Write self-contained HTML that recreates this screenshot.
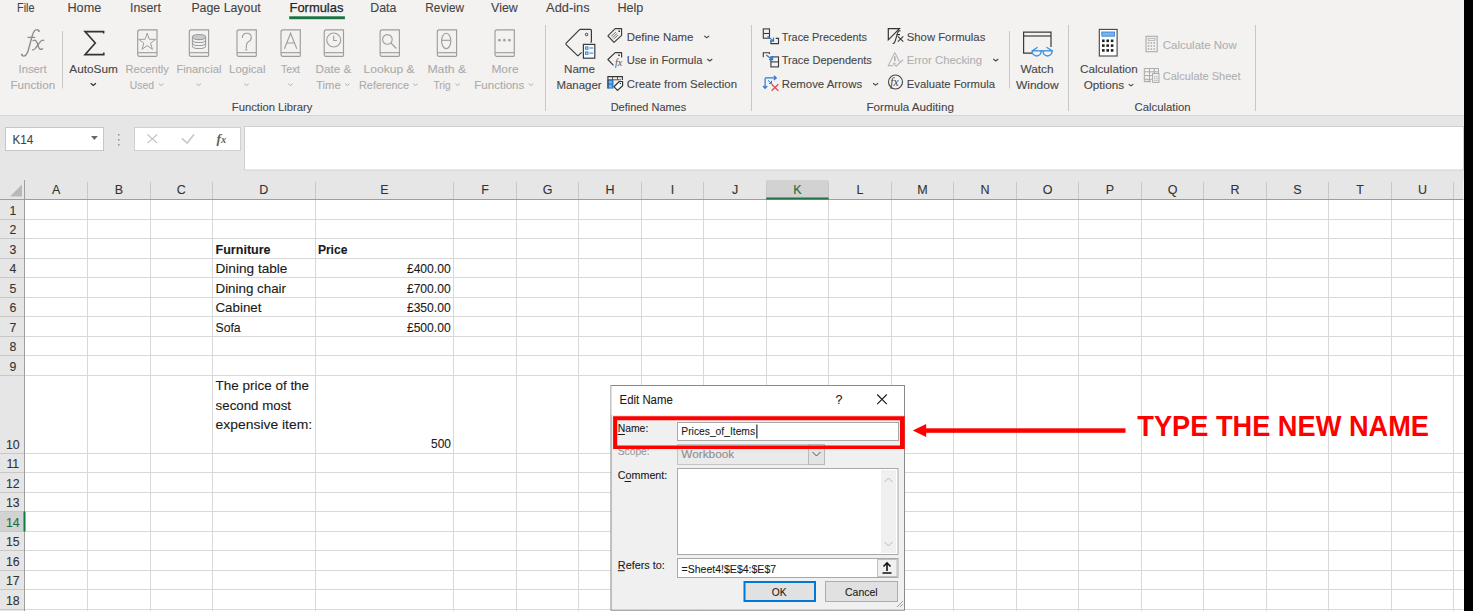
<!DOCTYPE html>
<html><head><meta charset="utf-8"><style>
html,body{margin:0;padding:0;background:#fff;overflow:hidden;}
svg{display:block;font-family:"Liberation Sans", sans-serif;}
</style></head><body>
<svg width="1473" height="611" viewBox="0 0 1473 611">
<rect x="0" y="0" width="1473" height="115" fill="#f3f2f1"/>
<rect x="0" y="115" width="1473" height="65" fill="#e6e6e6"/>
<line x1="0" y1="115.5" x2="1464" y2="115.5" stroke="#d6d6d6" stroke-width="1"/>
<text x="17" y="12" font-size="13" fill="#444" stroke="#444" stroke-width="0.1" textLength="17.6" lengthAdjust="spacingAndGlyphs">File</text>
<text x="67.5" y="12" font-size="13" fill="#444" stroke="#444" stroke-width="0.1" textLength="33.7" lengthAdjust="spacingAndGlyphs">Home</text>
<text x="130" y="12" font-size="13" fill="#444" stroke="#444" stroke-width="0.1" textLength="30.9" lengthAdjust="spacingAndGlyphs">Insert</text>
<text x="191.4" y="12" font-size="13" fill="#444" stroke="#444" stroke-width="0.1" textLength="69.3" lengthAdjust="spacingAndGlyphs">Page Layout</text>
<text x="289.5" y="12" font-size="13" fill="#262626" stroke="#262626" stroke-width="0.25" textLength="53.9" lengthAdjust="spacingAndGlyphs">Formulas</text>
<text x="370.3" y="12" font-size="13" fill="#444" stroke="#444" stroke-width="0.1" textLength="26.1" lengthAdjust="spacingAndGlyphs">Data</text>
<text x="425.3" y="12" font-size="13" fill="#444" stroke="#444" stroke-width="0.1" textLength="38.7" lengthAdjust="spacingAndGlyphs">Review</text>
<text x="491.1" y="12" font-size="13" fill="#444" stroke="#444" stroke-width="0.1" textLength="26.7" lengthAdjust="spacingAndGlyphs">View</text>
<text x="546.1" y="12" font-size="13" fill="#444" stroke="#444" stroke-width="0.1" textLength="43.5" lengthAdjust="spacingAndGlyphs">Add-ins</text>
<text x="617.4" y="12" font-size="13" fill="#444" stroke="#444" stroke-width="0.1" textLength="26.0" lengthAdjust="spacingAndGlyphs">Help</text>
<rect x="289.2" y="16.3" width="55.7" height="2.9" fill="#1a7343"/>
<rect x="25.0" y="199.3" width="1438.5" height="411.7" fill="#ffffff"/>
<rect x="0" y="180" width="1463.5" height="19.30000000000001" fill="#e6e6e6"/>
<rect x="0" y="199.3" width="25.0" height="411.7" fill="#e6e6e6"/>
<rect x="766.2" y="180" width="62.5" height="19.30000000000001" fill="#d2d2d2"/>
<rect x="0" y="511.5" width="25.0" height="20.0" fill="#d2d2d2"/>
<line x1="87.5" y1="199.3" x2="87.5" y2="611" stroke="#d9d9d9" stroke-width="1"/>
<line x1="87.5" y1="182" x2="87.5" y2="199.3" stroke="#c8c8c8" stroke-width="1"/>
<line x1="150.5" y1="199.3" x2="150.5" y2="611" stroke="#d9d9d9" stroke-width="1"/>
<line x1="150.5" y1="182" x2="150.5" y2="199.3" stroke="#c8c8c8" stroke-width="1"/>
<line x1="212.5" y1="199.3" x2="212.5" y2="611" stroke="#d9d9d9" stroke-width="1"/>
<line x1="212.5" y1="182" x2="212.5" y2="199.3" stroke="#c8c8c8" stroke-width="1"/>
<line x1="315.5" y1="199.3" x2="315.5" y2="611" stroke="#d9d9d9" stroke-width="1"/>
<line x1="315.5" y1="182" x2="315.5" y2="199.3" stroke="#c8c8c8" stroke-width="1"/>
<line x1="453.5" y1="199.3" x2="453.5" y2="611" stroke="#d9d9d9" stroke-width="1"/>
<line x1="453.5" y1="182" x2="453.5" y2="199.3" stroke="#c8c8c8" stroke-width="1"/>
<line x1="516.5" y1="199.3" x2="516.5" y2="611" stroke="#d9d9d9" stroke-width="1"/>
<line x1="516.5" y1="182" x2="516.5" y2="199.3" stroke="#c8c8c8" stroke-width="1"/>
<line x1="578.5" y1="199.3" x2="578.5" y2="611" stroke="#d9d9d9" stroke-width="1"/>
<line x1="578.5" y1="182" x2="578.5" y2="199.3" stroke="#c8c8c8" stroke-width="1"/>
<line x1="641.5" y1="199.3" x2="641.5" y2="611" stroke="#d9d9d9" stroke-width="1"/>
<line x1="641.5" y1="182" x2="641.5" y2="199.3" stroke="#c8c8c8" stroke-width="1"/>
<line x1="703.5" y1="199.3" x2="703.5" y2="611" stroke="#d9d9d9" stroke-width="1"/>
<line x1="703.5" y1="182" x2="703.5" y2="199.3" stroke="#c8c8c8" stroke-width="1"/>
<line x1="766.5" y1="199.3" x2="766.5" y2="611" stroke="#d9d9d9" stroke-width="1"/>
<line x1="766.5" y1="182" x2="766.5" y2="199.3" stroke="#c8c8c8" stroke-width="1"/>
<line x1="828.5" y1="199.3" x2="828.5" y2="611" stroke="#d9d9d9" stroke-width="1"/>
<line x1="828.5" y1="182" x2="828.5" y2="199.3" stroke="#c8c8c8" stroke-width="1"/>
<line x1="891.5" y1="199.3" x2="891.5" y2="611" stroke="#d9d9d9" stroke-width="1"/>
<line x1="891.5" y1="182" x2="891.5" y2="199.3" stroke="#c8c8c8" stroke-width="1"/>
<line x1="953.5" y1="199.3" x2="953.5" y2="611" stroke="#d9d9d9" stroke-width="1"/>
<line x1="953.5" y1="182" x2="953.5" y2="199.3" stroke="#c8c8c8" stroke-width="1"/>
<line x1="1016.5" y1="199.3" x2="1016.5" y2="611" stroke="#d9d9d9" stroke-width="1"/>
<line x1="1016.5" y1="182" x2="1016.5" y2="199.3" stroke="#c8c8c8" stroke-width="1"/>
<line x1="1078.5" y1="199.3" x2="1078.5" y2="611" stroke="#d9d9d9" stroke-width="1"/>
<line x1="1078.5" y1="182" x2="1078.5" y2="199.3" stroke="#c8c8c8" stroke-width="1"/>
<line x1="1141.5" y1="199.3" x2="1141.5" y2="611" stroke="#d9d9d9" stroke-width="1"/>
<line x1="1141.5" y1="182" x2="1141.5" y2="199.3" stroke="#c8c8c8" stroke-width="1"/>
<line x1="1203.5" y1="199.3" x2="1203.5" y2="611" stroke="#d9d9d9" stroke-width="1"/>
<line x1="1203.5" y1="182" x2="1203.5" y2="199.3" stroke="#c8c8c8" stroke-width="1"/>
<line x1="1266.5" y1="199.3" x2="1266.5" y2="611" stroke="#d9d9d9" stroke-width="1"/>
<line x1="1266.5" y1="182" x2="1266.5" y2="199.3" stroke="#c8c8c8" stroke-width="1"/>
<line x1="1328.5" y1="199.3" x2="1328.5" y2="611" stroke="#d9d9d9" stroke-width="1"/>
<line x1="1328.5" y1="182" x2="1328.5" y2="199.3" stroke="#c8c8c8" stroke-width="1"/>
<line x1="1391.5" y1="199.3" x2="1391.5" y2="611" stroke="#d9d9d9" stroke-width="1"/>
<line x1="1391.5" y1="182" x2="1391.5" y2="199.3" stroke="#c8c8c8" stroke-width="1"/>
<line x1="1453.5" y1="199.3" x2="1453.5" y2="611" stroke="#d9d9d9" stroke-width="1"/>
<line x1="1453.5" y1="182" x2="1453.5" y2="199.3" stroke="#c8c8c8" stroke-width="1"/>
<line x1="25.0" y1="219.5" x2="1463.5" y2="219.5" stroke="#d9d9d9" stroke-width="1"/>
<line x1="0" y1="219.5" x2="25.0" y2="219.5" stroke="#c8c8c8" stroke-width="1"/>
<line x1="25.0" y1="238.5" x2="1463.5" y2="238.5" stroke="#d9d9d9" stroke-width="1"/>
<line x1="0" y1="238.5" x2="25.0" y2="238.5" stroke="#c8c8c8" stroke-width="1"/>
<line x1="25.0" y1="258.5" x2="1463.5" y2="258.5" stroke="#d9d9d9" stroke-width="1"/>
<line x1="0" y1="258.5" x2="25.0" y2="258.5" stroke="#c8c8c8" stroke-width="1"/>
<line x1="25.0" y1="277.5" x2="1463.5" y2="277.5" stroke="#d9d9d9" stroke-width="1"/>
<line x1="0" y1="277.5" x2="25.0" y2="277.5" stroke="#c8c8c8" stroke-width="1"/>
<line x1="25.0" y1="297.5" x2="1463.5" y2="297.5" stroke="#d9d9d9" stroke-width="1"/>
<line x1="0" y1="297.5" x2="25.0" y2="297.5" stroke="#c8c8c8" stroke-width="1"/>
<line x1="25.0" y1="316.5" x2="1463.5" y2="316.5" stroke="#d9d9d9" stroke-width="1"/>
<line x1="0" y1="316.5" x2="25.0" y2="316.5" stroke="#c8c8c8" stroke-width="1"/>
<line x1="25.0" y1="336.5" x2="1463.5" y2="336.5" stroke="#d9d9d9" stroke-width="1"/>
<line x1="0" y1="336.5" x2="25.0" y2="336.5" stroke="#c8c8c8" stroke-width="1"/>
<line x1="25.0" y1="355.5" x2="1463.5" y2="355.5" stroke="#d9d9d9" stroke-width="1"/>
<line x1="0" y1="355.5" x2="25.0" y2="355.5" stroke="#c8c8c8" stroke-width="1"/>
<line x1="25.0" y1="375.5" x2="1463.5" y2="375.5" stroke="#d9d9d9" stroke-width="1"/>
<line x1="0" y1="375.5" x2="25.0" y2="375.5" stroke="#c8c8c8" stroke-width="1"/>
<line x1="25.0" y1="453.5" x2="1463.5" y2="453.5" stroke="#d9d9d9" stroke-width="1"/>
<line x1="0" y1="453.5" x2="25.0" y2="453.5" stroke="#c8c8c8" stroke-width="1"/>
<line x1="25.0" y1="472.5" x2="1463.5" y2="472.5" stroke="#d9d9d9" stroke-width="1"/>
<line x1="0" y1="472.5" x2="25.0" y2="472.5" stroke="#c8c8c8" stroke-width="1"/>
<line x1="25.0" y1="492.5" x2="1463.5" y2="492.5" stroke="#d9d9d9" stroke-width="1"/>
<line x1="0" y1="492.5" x2="25.0" y2="492.5" stroke="#c8c8c8" stroke-width="1"/>
<line x1="25.0" y1="511.5" x2="1463.5" y2="511.5" stroke="#d9d9d9" stroke-width="1"/>
<line x1="0" y1="511.5" x2="25.0" y2="511.5" stroke="#c8c8c8" stroke-width="1"/>
<line x1="25.0" y1="531.5" x2="1463.5" y2="531.5" stroke="#d9d9d9" stroke-width="1"/>
<line x1="0" y1="531.5" x2="25.0" y2="531.5" stroke="#c8c8c8" stroke-width="1"/>
<line x1="25.0" y1="550.5" x2="1463.5" y2="550.5" stroke="#d9d9d9" stroke-width="1"/>
<line x1="0" y1="550.5" x2="25.0" y2="550.5" stroke="#c8c8c8" stroke-width="1"/>
<line x1="25.0" y1="570.5" x2="1463.5" y2="570.5" stroke="#d9d9d9" stroke-width="1"/>
<line x1="0" y1="570.5" x2="25.0" y2="570.5" stroke="#c8c8c8" stroke-width="1"/>
<line x1="25.0" y1="589.5" x2="1463.5" y2="589.5" stroke="#d9d9d9" stroke-width="1"/>
<line x1="0" y1="589.5" x2="25.0" y2="589.5" stroke="#c8c8c8" stroke-width="1"/>
<line x1="25.0" y1="609.5" x2="1463.5" y2="609.5" stroke="#d9d9d9" stroke-width="1"/>
<line x1="0" y1="609.5" x2="25.0" y2="609.5" stroke="#c8c8c8" stroke-width="1"/>
<line x1="0" y1="199.5" x2="1463.5" y2="199.5" stroke="#9e9e9e" stroke-width="1"/>
<line x1="24.5" y1="180" x2="24.5" y2="611" stroke="#9e9e9e" stroke-width="1"/>
<rect x="766.2" y="197.5" width="62.5" height="2" fill="#217346"/>
<rect x="23.5" y="511.5" width="2" height="20.0" fill="#107c41"/>
<path d="M10 196.5 L22 196.5 L22 184.5 Z" fill="#b8b8b8"/>
<text x="56.2" y="194" font-size="12.5" fill="#333" stroke="#333" stroke-width="0.1" text-anchor="middle">A</text>
<text x="118.8" y="194" font-size="12.5" fill="#333" stroke="#333" stroke-width="0.1" text-anchor="middle">B</text>
<text x="181.2" y="194" font-size="12.5" fill="#333" stroke="#333" stroke-width="0.1" text-anchor="middle">C</text>
<text x="263.8" y="194" font-size="12.5" fill="#333" stroke="#333" stroke-width="0.1" text-anchor="middle">D</text>
<text x="384.4" y="194" font-size="12.5" fill="#333" stroke="#333" stroke-width="0.1" text-anchor="middle">E</text>
<text x="485.0" y="194" font-size="12.5" fill="#333" stroke="#333" stroke-width="0.1" text-anchor="middle">F</text>
<text x="547.5" y="194" font-size="12.5" fill="#333" stroke="#333" stroke-width="0.1" text-anchor="middle">G</text>
<text x="610.0" y="194" font-size="12.5" fill="#333" stroke="#333" stroke-width="0.1" text-anchor="middle">H</text>
<text x="672.5" y="194" font-size="12.5" fill="#333" stroke="#333" stroke-width="0.1" text-anchor="middle">I</text>
<text x="735.0" y="194" font-size="12.5" fill="#333" stroke="#333" stroke-width="0.1" text-anchor="middle">J</text>
<text x="797.5" y="194" font-size="12.5" fill="#1d6b40" stroke="#1d6b40" stroke-width="0.1" text-anchor="middle">K</text>
<text x="860.0" y="194" font-size="12.5" fill="#333" stroke="#333" stroke-width="0.1" text-anchor="middle">L</text>
<text x="922.5" y="194" font-size="12.5" fill="#333" stroke="#333" stroke-width="0.1" text-anchor="middle">M</text>
<text x="985.0" y="194" font-size="12.5" fill="#333" stroke="#333" stroke-width="0.1" text-anchor="middle">N</text>
<text x="1047.5" y="194" font-size="12.5" fill="#333" stroke="#333" stroke-width="0.1" text-anchor="middle">O</text>
<text x="1110.0" y="194" font-size="12.5" fill="#333" stroke="#333" stroke-width="0.1" text-anchor="middle">P</text>
<text x="1172.5" y="194" font-size="12.5" fill="#333" stroke="#333" stroke-width="0.1" text-anchor="middle">Q</text>
<text x="1235.0" y="194" font-size="12.5" fill="#333" stroke="#333" stroke-width="0.1" text-anchor="middle">R</text>
<text x="1297.5" y="194" font-size="12.5" fill="#333" stroke="#333" stroke-width="0.1" text-anchor="middle">S</text>
<text x="1360.0" y="194" font-size="12.5" fill="#333" stroke="#333" stroke-width="0.1" text-anchor="middle">T</text>
<text x="1422.5" y="194" font-size="12.5" fill="#333" stroke="#333" stroke-width="0.1" text-anchor="middle">U</text>
<text x="12.8" y="214.8" font-size="12.3" fill="#333" stroke="#333" stroke-width="0.1" text-anchor="middle">1</text>
<text x="12.8" y="233.8" font-size="12.3" fill="#333" stroke="#333" stroke-width="0.1" text-anchor="middle">2</text>
<text x="12.8" y="253.8" font-size="12.3" fill="#333" stroke="#333" stroke-width="0.1" text-anchor="middle">3</text>
<text x="12.8" y="272.8" font-size="12.3" fill="#333" stroke="#333" stroke-width="0.1" text-anchor="middle">4</text>
<text x="12.8" y="292.8" font-size="12.3" fill="#333" stroke="#333" stroke-width="0.1" text-anchor="middle">5</text>
<text x="12.8" y="311.8" font-size="12.3" fill="#333" stroke="#333" stroke-width="0.1" text-anchor="middle">6</text>
<text x="12.8" y="331.8" font-size="12.3" fill="#333" stroke="#333" stroke-width="0.1" text-anchor="middle">7</text>
<text x="12.8" y="350.8" font-size="12.3" fill="#333" stroke="#333" stroke-width="0.1" text-anchor="middle">8</text>
<text x="12.8" y="370.8" font-size="12.3" fill="#333" stroke="#333" stroke-width="0.1" text-anchor="middle">9</text>
<text x="12.8" y="448.8" font-size="12.3" fill="#333" stroke="#333" stroke-width="0.1" text-anchor="middle">10</text>
<text x="12.8" y="467.8" font-size="12.3" fill="#333" stroke="#333" stroke-width="0.1" text-anchor="middle">11</text>
<text x="12.8" y="487.8" font-size="12.3" fill="#333" stroke="#333" stroke-width="0.1" text-anchor="middle">12</text>
<text x="12.8" y="506.8" font-size="12.3" fill="#333" stroke="#333" stroke-width="0.1" text-anchor="middle">13</text>
<text x="12.8" y="526.8" font-size="12.3" fill="#1d6b40" stroke="#1d6b40" stroke-width="0.1" text-anchor="middle">14</text>
<text x="12.8" y="545.8" font-size="12.3" fill="#333" stroke="#333" stroke-width="0.1" text-anchor="middle">15</text>
<text x="12.8" y="565.8" font-size="12.3" fill="#333" stroke="#333" stroke-width="0.1" text-anchor="middle">16</text>
<text x="12.8" y="584.8" font-size="12.3" fill="#333" stroke="#333" stroke-width="0.1" text-anchor="middle">17</text>
<text x="12.8" y="604.8" font-size="12.3" fill="#333" stroke="#333" stroke-width="0.1" text-anchor="middle">18</text>
<text x="215.5" y="253.5" font-size="13" fill="#1a1a1a" stroke="#1a1a1a" stroke-width="0.1" font-weight="700" textLength="55.1" lengthAdjust="spacingAndGlyphs">Furniture</text>
<text x="317.9" y="253.5" font-size="13" fill="#1a1a1a" stroke="#1a1a1a" stroke-width="0.1" font-weight="700" textLength="29.5" lengthAdjust="spacingAndGlyphs">Price</text>
<text x="215.5" y="273.2" font-size="12.6" fill="#1a1a1a" stroke="#1a1a1a" stroke-width="0.1" textLength="71.9" lengthAdjust="spacingAndGlyphs">Dining table</text>
<text x="406.9" y="273.2" font-size="12.4" fill="#1a1a1a" stroke="#1a1a1a" stroke-width="0.1" textLength="43.8" lengthAdjust="spacingAndGlyphs">£400.00</text>
<text x="215.5" y="292.7" font-size="12.6" fill="#1a1a1a" stroke="#1a1a1a" stroke-width="0.1" textLength="70.5" lengthAdjust="spacingAndGlyphs">Dining chair</text>
<text x="406.9" y="292.7" font-size="12.4" fill="#1a1a1a" stroke="#1a1a1a" stroke-width="0.1" textLength="43.8" lengthAdjust="spacingAndGlyphs">£700.00</text>
<text x="215.5" y="312.2" font-size="12.6" fill="#1a1a1a" stroke="#1a1a1a" stroke-width="0.1" textLength="45.9" lengthAdjust="spacingAndGlyphs">Cabinet</text>
<text x="406.9" y="312.2" font-size="12.4" fill="#1a1a1a" stroke="#1a1a1a" stroke-width="0.1" textLength="43.8" lengthAdjust="spacingAndGlyphs">£350.00</text>
<text x="215.5" y="331.8" font-size="12.6" fill="#1a1a1a" stroke="#1a1a1a" stroke-width="0.1" textLength="25.1" lengthAdjust="spacingAndGlyphs">Sofa</text>
<text x="406.9" y="331.8" font-size="12.4" fill="#1a1a1a" stroke="#1a1a1a" stroke-width="0.1" textLength="43.8" lengthAdjust="spacingAndGlyphs">£500.00</text>
<text x="215.6" y="390.3" font-size="12.6" fill="#1a1a1a" stroke="#1a1a1a" stroke-width="0.1" textLength="93.5" lengthAdjust="spacingAndGlyphs">The price of the</text>
<text x="215.6" y="409.7" font-size="12.6" fill="#1a1a1a" stroke="#1a1a1a" stroke-width="0.1" textLength="75.4" lengthAdjust="spacingAndGlyphs">second most</text>
<text x="215.6" y="428.8" font-size="12.6" fill="#1a1a1a" stroke="#1a1a1a" stroke-width="0.1" textLength="96.5" lengthAdjust="spacingAndGlyphs">expensive item:</text>
<text x="431" y="448.2" font-size="12.4" fill="#1a1a1a" stroke="#1a1a1a" stroke-width="0.1" textLength="19.9" lengthAdjust="spacingAndGlyphs">500</text>
<rect x="5.5" y="127.5" width="98" height="23" fill="#fff" stroke="#c6c6c6" stroke-width="1"/>
<text x="12.4" y="144" font-size="12.5" fill="#444" stroke="#444" stroke-width="0.1" textLength="20.9" lengthAdjust="spacingAndGlyphs">K14</text>
<path d="M91 136 L97.8 136 L94.4 140 Z" fill="#666"/>
<rect x="118" y="134" width="1.6" height="1.6" fill="#9a9a9a"/>
<rect x="118" y="139" width="1.6" height="1.6" fill="#9a9a9a"/>
<rect x="118" y="144" width="1.6" height="1.6" fill="#9a9a9a"/>
<rect x="134.5" y="127.5" width="106" height="23" fill="#fff" stroke="#d0d0d0" stroke-width="1"/>
<path d="M147.5 134.5 L157.2 143.1 M157.2 134.5 L147.5 143.1" stroke="#c2c2c2" stroke-width="1.15" fill="none"/>
<path d="M181.8 138.4 L187.2 143.1 L193.9 134.5" stroke="#c8c8c8" stroke-width="1.6" fill="none"/>
<text x="216.5" y="143.3" font-size="13.5" fill="#606060" font-weight="700" font-style="italic" font-family="Liberation Serif">f<tspan font-size="10.5">x</tspan></text>
<rect x="244.5" y="126.5" width="1219" height="43.5" fill="#fff" stroke="#d0d0d0" stroke-width="1"/>
<rect x="1464" y="0" width="9" height="611" fill="#000"/>
<!--RIBBON-->
<line x1="62.5" y1="31" x2="62.5" y2="88.5" stroke="#c8c8c8" stroke-width="1"/>
<line x1="545.5" y1="25" x2="545.5" y2="111" stroke="#c8c8c8" stroke-width="1"/>
<line x1="751.5" y1="25" x2="751.5" y2="111" stroke="#c8c8c8" stroke-width="1"/>
<line x1="1009.5" y1="31" x2="1009.5" y2="88.5" stroke="#c8c8c8" stroke-width="1"/>
<line x1="1068.5" y1="25" x2="1068.5" y2="111" stroke="#c8c8c8" stroke-width="1"/>
<line x1="1255.5" y1="25" x2="1255.5" y2="111" stroke="#c8c8c8" stroke-width="1"/>
<text x="231.8" y="111" font-size="11.3" fill="#464646" stroke="#464646" stroke-width="0.1" textLength="80.7" lengthAdjust="spacingAndGlyphs">Function Library</text>
<text x="610.7" y="111" font-size="11.3" fill="#464646" stroke="#464646" stroke-width="0.1" textLength="75.5" lengthAdjust="spacingAndGlyphs">Defined Names</text>
<text x="866.5" y="111" font-size="11.3" fill="#464646" stroke="#464646" stroke-width="0.1" textLength="87.4" lengthAdjust="spacingAndGlyphs">Formula Auditing</text>
<text x="1134.5" y="111.2" font-size="11.3" fill="#464646" stroke="#464646" stroke-width="0.1" textLength="56" lengthAdjust="spacingAndGlyphs">Calculation</text>
<g fill="none" stroke="#8c8c8c" stroke-width="1.35" stroke-linecap="round"><path d="M38.9 31.2 C38.5 29.6 37 29.2 35.5 30 C33.6 31.1 32.6 34 31.6 38 L28.2 50.5 C27.2 54 25.6 56.1 23.6 56.1 C22.5 56.1 21.8 55.3 21.9 54.5"/><path d="M28 37.4 L34.8 37.4" stroke-width="1.1"/><path d="M33.1 40.6 C34.6 39.6 36 40.1 37 42.6 L38.6 47 C39.3 49 40.1 49.9 42.5 48.8"/><path d="M43.7 40.4 C42.5 39.6 41 40.6 39.6 42.6 L35.6 48 C34.6 49.5 33.6 50 32.7 49.8"/></g>
<circle cx="38.8" cy="31" r="0.9" fill="#8c8c8c"/><circle cx="22" cy="54.6" r="0.9" fill="#8c8c8c"/>
<text x="18.6" y="73" font-size="11.6" fill="#ababab" stroke="#ababab" stroke-width="0.1" textLength="28" lengthAdjust="spacingAndGlyphs">Insert</text>
<text x="10.5" y="88.8" font-size="11.6" fill="#ababab" stroke="#ababab" stroke-width="0.1" textLength="44.6" lengthAdjust="spacingAndGlyphs">Function</text>
<path d="M103.6 33.5 L103.6 31.6 L85 31.6 L95.3 43 L85 54.6 L103.8 54.6 L103.8 52.5" stroke="#333" stroke-width="1.6" fill="none" stroke-linejoin="miter"/>
<text x="69.3" y="73" font-size="11.6" fill="#464646" stroke="#464646" stroke-width="0.1" textLength="48.5" lengthAdjust="spacingAndGlyphs">AutoSum</text>
<path d="M90.7 83.2 L93.3 85.39999999999999 L95.89999999999999 83.2" stroke="#333" stroke-width="1.3" fill="none"/>
<g fill="none" stroke="#9d9d9d" stroke-width="1.15"><path d="M139.8 29.8 L157.0 29.8 L157.0 55.4 Q157.0 56.3 156.1 56.3 L139.2 56.3 Q137.7 56.3 137.7 54.6 L137.7 31.9 Q137.7 29.8 139.8 29.8 Z"/><path d="M137.7 52.7 L157.0 52.7"/></g>
<path d="M147.20 33.20 L149.26 39.27 L155.66 39.35 L150.53 43.18 L152.43 49.30 L147.20 45.60 L141.97 49.30 L143.87 43.18 L138.74 39.35 L145.14 39.27 Z" fill="none" stroke="#9d9d9d" stroke-width="1" stroke-linejoin="miter"/>
<g fill="none" stroke="#9d9d9d" stroke-width="1.15"><path d="M191.4 29.8 L208.6 29.8 L208.6 55.4 Q208.6 56.3 207.7 56.3 L190.79999999999998 56.3 Q189.29999999999998 56.3 189.29999999999998 54.6 L189.29999999999998 31.9 Q189.29999999999998 29.8 191.4 29.8 Z"/><path d="M189.29999999999998 52.7 L208.6 52.7"/></g>
<g fill="none" stroke="#9d9d9d" stroke-width="1.05"><path d="M192.4 37 L192.4 45.8 M205.6 37 L205.6 45.8"/><path d="M192.4 39.9 A6.6 2.6 0 0 0 205.6 39.9"/><path d="M192.4 42.9 A6.6 2.6 0 0 0 205.6 42.9"/><path d="M192.4 45.9 A6.6 2.6 0 0 0 205.6 45.9"/><ellipse cx="199.0" cy="37" rx="6.6" ry="2.6" fill="#c9c9c9"/></g>
<g fill="none" stroke="#9d9d9d" stroke-width="1.15"><path d="M239.10000000000002 29.8 L256.3 29.8 L256.3 55.4 Q256.3 56.3 255.4 56.3 L238.5 56.3 Q237.0 56.3 237.0 54.6 L237.0 31.9 Q237.0 29.8 239.10000000000002 29.8 Z"/><path d="M237.0 52.7 L256.3 52.7"/></g>
<path d="M242.3 38 Q242.3 33.2 246.90000000000003 33.2 Q251.3 33.2 251.3 37.5 Q251.3 40.5 248.10000000000002 42 Q246.3 43 246.3 46.5 L246.3 48" fill="none" stroke="#9d9d9d" stroke-width="1.1"/><circle cx="246.3" cy="49.5" r="1" fill="#9d9d9d"/>
<g fill="none" stroke="#9d9d9d" stroke-width="1.15"><path d="M283.1 29.8 L300.3 29.8 L300.3 55.4 Q300.3 56.3 299.40000000000003 56.3 L282.5 56.3 Q281.0 56.3 281.0 54.6 L281.0 31.9 Q281.0 29.8 283.1 29.8 Z"/><path d="M281.0 52.7 L300.3 52.7"/></g>
<path d="M284.40000000000003 48.8 L290.6 33.3 L296.8 48.8 M286.8 43 L294.40000000000003 43" fill="none" stroke="#9d9d9d" stroke-width="1.1"/>
<g fill="none" stroke="#9d9d9d" stroke-width="1.15"><path d="M326.3 29.8 L343.5 29.8 L343.5 55.4 Q343.5 56.3 342.6 56.3 L325.7 56.3 Q324.2 56.3 324.2 54.6 L324.2 31.9 Q324.2 29.8 326.3 29.8 Z"/><path d="M324.2 52.7 L343.5 52.7"/></g>
<circle cx="333.7" cy="40" r="7" fill="none" stroke="#9d9d9d" stroke-width="1.1"/><path d="M333.7 35.8 L333.7 40.5 L337.0 40.5" fill="none" stroke="#9d9d9d" stroke-width="1.1"/>
<g fill="none" stroke="#9d9d9d" stroke-width="1.15"><path d="M382.2 29.8 L399.4 29.8 L399.4 55.4 Q399.4 56.3 398.5 56.3 L381.59999999999997 56.3 Q380.09999999999997 56.3 380.09999999999997 54.6 L380.09999999999997 31.9 Q380.09999999999997 29.8 382.2 29.8 Z"/><path d="M380.09999999999997 52.7 L399.4 52.7"/></g>
<circle cx="387.4" cy="39.4" r="4.8" fill="none" stroke="#9d9d9d" stroke-width="1.1"/><path d="M390.79999999999995 42.8 L396.4 48.5" fill="none" stroke="#9d9d9d" stroke-width="1.2"/>
<g fill="none" stroke="#9d9d9d" stroke-width="1.15"><path d="M439.40000000000003 29.8 L456.6 29.8 L456.6 55.4 Q456.6 56.3 455.70000000000005 56.3 L438.8 56.3 Q437.3 56.3 437.3 54.6 L437.3 31.9 Q437.3 29.8 439.40000000000003 29.8 Z"/><path d="M437.3 52.7 L456.6 52.7"/></g>
<ellipse cx="446.20000000000005" cy="40.9" rx="4.6" ry="7.7" fill="none" stroke="#9d9d9d" stroke-width="1.15"/><path d="M441.6 40.3 L450.80000000000007 40.3" stroke="#9d9d9d" stroke-width="1.1"/>
<g fill="none" stroke="#9d9d9d" stroke-width="1.15"><path d="M497.1 29.8 L514.3 29.8 L514.3 55.4 Q514.3 56.3 513.4 56.3 L496.5 56.3 Q495.0 56.3 495.0 54.6 L495.0 31.9 Q495.0 29.8 497.1 29.8 Z"/><path d="M495.0 52.7 L514.3 52.7"/></g>
<circle cx="499.40000000000003" cy="40.2" r="1.35" fill="#a2a2a2"/><circle cx="504.40000000000003" cy="40.2" r="1.35" fill="#a2a2a2"/><circle cx="509.40000000000003" cy="40.2" r="1.35" fill="#a2a2a2"/>
<text x="125.5" y="73" font-size="11.6" fill="#ababab" stroke="#ababab" stroke-width="0.1" textLength="43.3" lengthAdjust="spacingAndGlyphs">Recently</text>
<text x="129.8" y="88.8" font-size="11.6" fill="#ababab" stroke="#ababab" stroke-width="0.1" textLength="24.2" lengthAdjust="spacingAndGlyphs">Used</text>
<text x="176.4" y="73" font-size="11.6" fill="#ababab" stroke="#ababab" stroke-width="0.1" textLength="45.0" lengthAdjust="spacingAndGlyphs">Financial</text>
<text x="229" y="73" font-size="11.6" fill="#ababab" stroke="#ababab" stroke-width="0.1" textLength="36.5" lengthAdjust="spacingAndGlyphs">Logical</text>
<text x="281" y="73" font-size="11.6" fill="#ababab" stroke="#ababab" stroke-width="0.1" textLength="19" lengthAdjust="spacingAndGlyphs">Text</text>
<text x="315.6" y="73" font-size="11.6" fill="#ababab" stroke="#ababab" stroke-width="0.1" textLength="35.8" lengthAdjust="spacingAndGlyphs">Date &amp;</text>
<text x="316.2" y="88.8" font-size="11.6" fill="#ababab" stroke="#ababab" stroke-width="0.1" textLength="24.5" lengthAdjust="spacingAndGlyphs">Time</text>
<text x="363.5" y="73" font-size="11.6" fill="#ababab" stroke="#ababab" stroke-width="0.1" textLength="51.0" lengthAdjust="spacingAndGlyphs">Lookup &amp;</text>
<text x="359" y="88.8" font-size="11.6" fill="#ababab" stroke="#ababab" stroke-width="0.1" textLength="50.1" lengthAdjust="spacingAndGlyphs">Reference</text>
<text x="427.4" y="73" font-size="11.6" fill="#ababab" stroke="#ababab" stroke-width="0.1" textLength="38.9" lengthAdjust="spacingAndGlyphs">Math &amp;</text>
<text x="433.5" y="88.8" font-size="11.6" fill="#ababab" stroke="#ababab" stroke-width="0.1" textLength="17.1" lengthAdjust="spacingAndGlyphs">Trig</text>
<text x="491.4" y="73" font-size="11.6" fill="#ababab" stroke="#ababab" stroke-width="0.1" textLength="27.2" lengthAdjust="spacingAndGlyphs">More</text>
<text x="474.3" y="88.8" font-size="11.6" fill="#ababab" stroke="#ababab" stroke-width="0.1" textLength="50.0" lengthAdjust="spacingAndGlyphs">Functions</text>
<path d="M158.9 83.69999999999999 L161.1 85.5 L163.29999999999998 83.69999999999999" stroke="#b0b0b0" stroke-width="1" fill="none"/>
<path d="M196.5 83.69999999999999 L198.7 85.5 L200.89999999999998 83.69999999999999" stroke="#b0b0b0" stroke-width="1" fill="none"/>
<path d="M244.3 83.69999999999999 L246.5 85.5 L248.7 83.69999999999999" stroke="#b0b0b0" stroke-width="1" fill="none"/>
<path d="M288.3 83.69999999999999 L290.5 85.5 L292.7 83.69999999999999" stroke="#b0b0b0" stroke-width="1" fill="none"/>
<path d="M345.2 83.69999999999999 L347.4 85.5 L349.59999999999997 83.69999999999999" stroke="#b0b0b0" stroke-width="1" fill="none"/>
<path d="M413.2 83.69999999999999 L415.4 85.5 L417.59999999999997 83.69999999999999" stroke="#b0b0b0" stroke-width="1" fill="none"/>
<path d="M455.40000000000003 83.69999999999999 L457.6 85.5 L459.8 83.69999999999999" stroke="#b0b0b0" stroke-width="1" fill="none"/>
<path d="M528.6999999999999 83.69999999999999 L530.9 85.5 L533.1 83.69999999999999" stroke="#b0b0b0" stroke-width="1" fill="none"/>
<text x="564" y="73" font-size="11.6" fill="#464646" stroke="#464646" stroke-width="0.1" textLength="31" lengthAdjust="spacingAndGlyphs">Name</text>
<text x="556.4" y="89" font-size="11.6" fill="#464646" stroke="#464646" stroke-width="0.1" textLength="45.2" lengthAdjust="spacingAndGlyphs">Manager</text>
<path d="M590.6 42.6 L591.4 41.8 L591.4 30.6 Q591.4 29.4 590.2 29.4 L580.4 29.4 Q579.8 29.4 579.3 29.9 L566.2 43.2 Q565.6 43.9 566.2 44.6 L577.3 55.4 Q577.9 56 578.5 55.4 L581.6 52.3" fill="none" stroke="#3a3a3a" stroke-width="1.2"/>
<circle cx="586.6" cy="34.5" r="1.25" fill="none" stroke="#3a3a3a" stroke-width="1"/>
<rect x="583.4" y="44.4" width="11.4" height="13.8" fill="#f4f9fe" stroke="#3a3a3a" stroke-width="1.2"/>
<rect x="585.6" y="46.9" width="2.3" height="2.3" fill="none" stroke="#2b7bd6" stroke-width="1"/><rect x="585.6" y="52" width="2.3" height="2.3" fill="none" stroke="#2b7bd6" stroke-width="1"/>
<path d="M589.4 48 L593.2 48 M589.4 53.1 L593.2 53.1" stroke="#2b7bd6" stroke-width="1"/>
<path d="M615.2 28.6 L621.6 28.6 L621.6 35.3 L614 42.3 L607.9 35.8 Z" fill="none" stroke="#3a3a3a" stroke-width="1.15" stroke-linejoin="round"/>
<path d="M611.3 36.2 L615.9 32.1 M612.5 37.6 L617.1 33.5 M613.7 39 L618.3 34.9" stroke="#555" stroke-width="0.8"/>
<circle cx="619.2" cy="31.2" r="0.9" fill="#3a3a3a"/>
<text x="626.7" y="40.6" font-size="11.6" fill="#464646" stroke="#464646" stroke-width="0.1" textLength="66.7" lengthAdjust="spacingAndGlyphs">Define Name</text>
<path d="M704.2 35.849999999999994 L706.7 37.75 L709.2 35.849999999999994" stroke="#464646" stroke-width="1.1" fill="none"/>
<path d="M621.6 57.6 L621.6 52.6 L615.2 52.6 L607.9 59.5 L613.5 65.4" fill="none" stroke="#3a3a3a" stroke-width="1.15" stroke-linejoin="round"/>
<circle cx="619" cy="55.2" r="0.9" fill="#3a3a3a"/>
<text x="615" y="65.8" font-size="10" fill="#555" font-style="italic" font-family="Liberation Serif">fx</text>
<text x="626.7" y="63.8" font-size="11.6" fill="#464646" stroke="#464646" stroke-width="0.1" textLength="75.8" lengthAdjust="spacingAndGlyphs">Use in Formula</text>
<path d="M707.3 59.05 L709.8 60.95 L712.3 59.05" stroke="#464646" stroke-width="1.1" fill="none"/>
<rect x="607.6" y="79.8" width="5.9" height="8.8" fill="#2f7fd1"/>
<rect x="608.6" y="80.7" width="3.2" height="2.7" fill="#72b6ee"/><rect x="608.6" y="84.8" width="3.2" height="2.8" fill="#72b6ee"/>
<path d="M607.9 88.5 L607.9 76.6 L622.4 76.6 L622.4 80" fill="none" stroke="#333" stroke-width="1.1"/>
<path d="M612.5 76.6 L612.5 79.8 M617.5 76.6 L617.5 79.8 M607.9 79.8 L621 79.8" stroke="#444" stroke-width="0.9"/>
<path d="M619.3 81.5 L622.6 81.5 L622.6 85.7 L617.5 90.4 L613.9 86.7 Z" fill="#fff" stroke="#333" stroke-width="1.2" stroke-linejoin="round"/>
<circle cx="620.4" cy="83.6" r="0.75" fill="#333"/>
<text x="626.7" y="87.8" font-size="11.6" fill="#464646" stroke="#464646" stroke-width="0.1" textLength="110.3" lengthAdjust="spacingAndGlyphs">Create from Selection</text>
<g fill="none" stroke="#3a3a3a" stroke-width="1.1"><rect x="763.3" y="28.9" width="6.2" height="9.3"/><path d="M763.3 33.5 L769.5 33.5"/><path d="M770.9 40.3 L770.9 43.6 L778.5 43.6 L778.5 38.4 L775.8 38.4"/></g>
<path d="M767.6 36.2 L773 40.6 M773.5 37.6 L773.5 41.1 L770 41.1" stroke="#2b7bd6" stroke-width="1.2" fill="none"/>
<text x="781.8" y="40.5" font-size="11.6" fill="#464646" stroke="#464646" stroke-width="0.1" textLength="85.1" lengthAdjust="spacingAndGlyphs">Trace Precedents</text>
<g fill="none" stroke="#3a3a3a" stroke-width="1.1"><path d="M763.3 57.3 L763.3 52.7 L769.5 52.7 L769.5 54"/><rect x="770.9" y="56.9" width="7.6" height="10"/><path d="M770.9 61.9 L778.5 61.9"/></g>
<path d="M766.2 55 L772 59.4 M772.6 56 L772.6 59.7 L769 59.7" stroke="#2b7bd6" stroke-width="1.2" fill="none"/>
<text x="781.8" y="64.4" font-size="11.6" fill="#464646" stroke="#464646" stroke-width="0.1" textLength="90" lengthAdjust="spacingAndGlyphs">Trace Dependents</text>
<path d="M765.1 78.3 L765.1 88.3 M763 86 L765.1 88.4 L767.2 86 M765.1 77.9 L776.3 77.9 M773.8 75.8 L776.3 77.9 L773.8 80" stroke="#2b7bd6" stroke-width="1.2" fill="none"/>
<path d="M768 80.3 L771.3 83.2 M771.5 80.8 L771.5 83.4 L769 83.4" stroke="#2b7bd6" stroke-width="1" fill="none"/>
<path d="M771.6 84.2 L778.3 90.8 M778.3 84.2 L771.6 90.8" stroke="#e24a4a" stroke-width="1.25" fill="none"/>
<text x="781.8" y="87.7" font-size="11.6" fill="#464646" stroke="#464646" stroke-width="0.1" textLength="80.3" lengthAdjust="spacingAndGlyphs">Remove Arrows</text>
<path d="M873.1 83.25 L875.6 85.15 L878.1 83.25" stroke="#464646" stroke-width="1.1" fill="none"/>
<path d="M888.3 39.8 L888.3 28.6 L899.5 28.6 Z" fill="none" stroke="#333" stroke-width="1.2" stroke-linejoin="miter"/>
<path d="M900.6 31.2 C899.6 30.3 898.4 30.8 897.8 32.5 L895 41.5 C894.5 43 893.5 43.6 892.6 43.3 M896.3 34.6 L900 34.6" fill="none" stroke="#3a3a3a" stroke-width="1.1"/>
<path d="M897.8 36.3 L903.3 41.6 M903.3 36.3 L897.8 41.6" fill="none" stroke="#3a3a3a" stroke-width="1.1"/>
<text x="906.8" y="40.5" font-size="11.6" fill="#464646" stroke="#464646" stroke-width="0.1" textLength="78.5" lengthAdjust="spacingAndGlyphs">Show Formulas</text>
<path d="M894.8 52.6 L888.3 65.6 L893 65.6 M894.8 52.6 L899.5 61.8" fill="none" stroke="#b8b8b8" stroke-width="1.1"/>
<path d="M894.8 56.2 L894.8 61.3" stroke="#b0b0b0" stroke-width="1.6"/><circle cx="894.8" cy="63.2" r="0.8" fill="#b0b0b0"/>
<path d="M893 63.4 L896.2 66.3 L903 59.8" fill="none" stroke="#b8b8b8" stroke-width="1.2"/>
<text x="906.8" y="64.4" font-size="11.6" fill="#b0b0b0" stroke="#b0b0b0" stroke-width="0.1" textLength="75.3" lengthAdjust="spacingAndGlyphs">Error Checking</text>
<path d="M993.3 59.05 L995.8 60.95 L998.3 59.05" stroke="#464646" stroke-width="1.1" fill="none"/>
<circle cx="895.5" cy="82" r="7" fill="none" stroke="#444" stroke-width="1.1"/>
<text x="890.3" y="86.3" font-size="11.5" fill="#444" font-style="italic" font-family="Liberation Serif">fx</text>
<text x="906.8" y="87.7" font-size="11.6" fill="#464646" stroke="#464646" stroke-width="0.1" textLength="88.2" lengthAdjust="spacingAndGlyphs">Evaluate Formula</text>
<path d="M1032 53.2 L1023.6 53.2 L1023.6 32.2 L1051 32.2 L1051 47" fill="none" stroke="#3a3a3a" stroke-width="1.2"/><path d="M1023.6 36 L1051 36" stroke="#3a3a3a" stroke-width="1.2"/>
<g fill="none" stroke="#3a8fdc" stroke-width="1.35"><path d="M1031.8 50.8 L1052.8 50.8"/><path d="M1032.2 50.8 A4.5 4.5 0 1 0 1041.1 50.8 M1043.1 50.8 A4.5 4.5 0 1 0 1052 50.8"/><path d="M1032.2 51 L1037.5 47.2 M1052.5 51 L1046.5 47.2"/></g>
<text x="1020.4" y="72.9" font-size="11.6" fill="#464646" stroke="#464646" stroke-width="0.1" textLength="33.2" lengthAdjust="spacingAndGlyphs">Watch</text>
<text x="1015.9" y="89.2" font-size="11.6" fill="#464646" stroke="#464646" stroke-width="0.1" textLength="42.7" lengthAdjust="spacingAndGlyphs">Window</text>
<rect x="1099.3" y="29.4" width="17.8" height="26.6" fill="#fff" stroke="#444" stroke-width="1.1"/>
<rect x="1101.8" y="32" width="12.8" height="4.2" fill="#7ab4ea" stroke="#2b7bd6" stroke-width="0.8"/>
<rect x="1102.0" y="39.5" width="2.6" height="2.6" fill="#222"/>
<rect x="1106.4" y="39.5" width="2.6" height="2.6" fill="#222"/>
<rect x="1110.8" y="39.5" width="2.6" height="2.6" fill="#222"/>
<rect x="1102.0" y="44.3" width="2.6" height="2.6" fill="#222"/>
<rect x="1106.4" y="44.3" width="2.6" height="2.6" fill="#222"/>
<rect x="1110.8" y="44.3" width="2.6" height="2.6" fill="#222"/>
<rect x="1102.0" y="49.1" width="2.6" height="2.6" fill="#222"/>
<rect x="1106.4" y="49.1" width="2.6" height="2.6" fill="#222"/>
<rect x="1110.8" y="49.1" width="2.6" height="2.6" fill="#222"/>
<text x="1080" y="72.9" font-size="11.6" fill="#464646" stroke="#464646" stroke-width="0.1" textLength="57.7" lengthAdjust="spacingAndGlyphs">Calculation</text>
<text x="1083.7" y="89.2" font-size="11.6" fill="#464646" stroke="#464646" stroke-width="0.1" textLength="40.3" lengthAdjust="spacingAndGlyphs">Options</text>
<path d="M1128.7 84.1 L1131 85.9 L1133.3 84.1" stroke="#464646" stroke-width="1.1" fill="none"/>
<rect x="1146" y="36.3" width="11.2" height="15.4" fill="none" stroke="#ababab" stroke-width="1.1"/><rect x="1148.2" y="38.4" width="6.8" height="2" fill="none" stroke="#b4b4b4" stroke-width="0.9"/>
<rect x="1147.8" y="42.2" width="1.5" height="1.5" fill="#a8a8a8"/>
<rect x="1150.6" y="42.2" width="1.5" height="1.5" fill="#a8a8a8"/>
<rect x="1153.5" y="42.2" width="1.5" height="1.5" fill="#a8a8a8"/>
<rect x="1147.8" y="45.2" width="1.5" height="1.5" fill="#a8a8a8"/>
<rect x="1150.6" y="45.2" width="1.5" height="1.5" fill="#a8a8a8"/>
<rect x="1153.5" y="45.2" width="1.5" height="1.5" fill="#a8a8a8"/>
<rect x="1147.8" y="48.3" width="1.5" height="1.5" fill="#a8a8a8"/>
<rect x="1150.6" y="48.3" width="1.5" height="1.5" fill="#a8a8a8"/>
<rect x="1153.5" y="48.3" width="1.5" height="1.5" fill="#a8a8a8"/>
<text x="1162.8" y="48.6" font-size="11.6" fill="#b0b0b0" stroke="#b0b0b0" stroke-width="0.1" textLength="73.9" lengthAdjust="spacingAndGlyphs">Calculate Now</text>
<g fill="none" stroke="#ababab" stroke-width="1"><path d="M1144.3 81.5 L1144.3 68.5 L1158.5 68.5 L1158.5 73"/><path d="M1144.3 71.8 L1158.5 71.8 M1144.3 75.6 L1152 75.6 M1144.3 79.3 L1152 79.3 M1149.5 68.5 L1149.5 81.5 M1154.3 68.5 L1154.3 73"/></g>
<rect x="1152.6" y="73.6" width="6.4" height="8.8" fill="#f3f2f1" stroke="#ababab" stroke-width="1"/>
<path d="M1144.3 81.5 L1151 81.5" stroke="#ababab" stroke-width="1.4"/>
<rect x="1154.1" y="76.0" width="1.3" height="1.2" fill="#b4b4b4"/>
<rect x="1156.3" y="76.0" width="1.3" height="1.2" fill="#b4b4b4"/>
<rect x="1154.1" y="78.0" width="1.3" height="1.2" fill="#b4b4b4"/>
<rect x="1156.3" y="78.0" width="1.3" height="1.2" fill="#b4b4b4"/>
<rect x="1154.1" y="80.0" width="1.3" height="1.2" fill="#b4b4b4"/>
<rect x="1156.3" y="80.0" width="1.3" height="1.2" fill="#b4b4b4"/>
<text x="1162.8" y="79.8" font-size="11.6" fill="#b0b0b0" stroke="#b0b0b0" stroke-width="0.1" textLength="77.7" lengthAdjust="spacingAndGlyphs">Calculate Sheet</text>
<rect x="611" y="385.5" width="293.5" height="224.70000000000005" fill="#f0f0f0" stroke="#8a8a8a" stroke-width="1"/>
<rect x="611.5" y="386.0" width="292.5" height="29" fill="#ffffff"/>
<text x="619.6" y="403.6" font-size="12.5" fill="#1a1a1a" stroke="#1a1a1a" stroke-width="0.1" textLength="53.2" lengthAdjust="spacingAndGlyphs">Edit Name</text>
<text x="835.6" y="404.1" font-size="12.5" fill="#1a1a1a" stroke="#1a1a1a" stroke-width="0.1">?</text>
<path d="M877.2 394.5 L886.8 404.2 M886.8 394.5 L877.2 404.2" stroke="#1a1a1a" stroke-width="1.1"/>
<text x="617.7" y="432.3" font-size="11.8" fill="#1a1a1a" stroke="#1a1a1a" stroke-width="0.1" textLength="30.6" lengthAdjust="spacingAndGlyphs">Name:</text>
<rect x="617.7" y="434" width="7.2" height="1" fill="#1a1a1a"/>
<rect x="677.5" y="422.5" width="221" height="18" fill="#fff" stroke="#a8a8a8" stroke-width="1"/>
<text x="681.3" y="434.7" font-size="11.8" fill="#1a1a1a" stroke="#1a1a1a" stroke-width="0.1" textLength="73.8" lengthAdjust="spacingAndGlyphs">Prices_of_Items</text>
<line x1="756.9" y1="424.5" x2="756.9" y2="438.5" stroke="#000" stroke-width="1"/>
<text x="617.7" y="455.2" font-size="11.8" fill="#9a9a9a" stroke="#9a9a9a" stroke-width="0.1" textLength="32" lengthAdjust="spacingAndGlyphs">Scope:</text>
<rect x="677.5" y="444.5" width="147" height="20" fill="#eaeaea" stroke="#c4c4c4" stroke-width="1"/>
<text x="681.3" y="458.4" font-size="11.8" fill="#8d8d8d" stroke="#8d8d8d" stroke-width="0.1" textLength="52.9" lengthAdjust="spacingAndGlyphs">Workbook</text>
<rect x="808.5" y="444.5" width="16" height="20" fill="#e3e3e3" stroke="#b8b8b8" stroke-width="1"/>
<path d="M812.5 452 L816.5 456 L820.5 452" stroke="#555" stroke-width="1" fill="none"/>
<text x="617.8" y="479.3" font-size="11.8" fill="#1a1a1a" stroke="#1a1a1a" stroke-width="0.1" textLength="49.5" lengthAdjust="spacingAndGlyphs">Comment:</text>
<rect x="624.5" y="481" width="6.6" height="1" fill="#1a1a1a"/>
<rect x="677.5" y="468.5" width="220.5" height="86" fill="#fff" stroke="#a8a8a8" stroke-width="1"/>
<rect x="881" y="470" width="15" height="83" fill="#f0f0f0"/>
<path d="M884.5 482 L888.5 478 L892.5 482 M884.5 542 L888.5 546 L892.5 542" stroke="#b8b8b8" stroke-width="1" fill="none"/>
<text x="617.8" y="568.8" font-size="11.8" fill="#1a1a1a" stroke="#1a1a1a" stroke-width="0.1" textLength="47" lengthAdjust="spacingAndGlyphs">Refers to:</text>
<rect x="617.8" y="570.2" width="6.8" height="1" fill="#1a1a1a"/>
<rect x="677.5" y="558.5" width="220.5" height="19" fill="#fff" stroke="#a8a8a8" stroke-width="1"/>
<text x="681.6" y="572.5" font-size="11" fill="#1a1a1a" stroke="#1a1a1a" stroke-width="0.1" textLength="94.5" lengthAdjust="spacingAndGlyphs">=Sheet4!$E$4:$E$7</text>
<rect x="877.5" y="559.5" width="19.5" height="17" fill="#f0f0f0" stroke="#c0c0c0" stroke-width="1"/>
<path d="M887 563 L887 571 M883.5 566.5 L887 562.8 L890.5 566.5 M882.5 573 L891.5 573" stroke="#111" stroke-width="1.6" fill="none"/>
<rect x="744.5" y="582" width="70.5" height="19" fill="#e1e1e1" stroke="#0078d7" stroke-width="2"/>
<text x="771.7" y="595.5" font-size="11.8" fill="#1a1a1a" stroke="#1a1a1a" stroke-width="0.1" textLength="14.8" lengthAdjust="spacingAndGlyphs">OK</text>
<rect x="825.5" y="581.5" width="72" height="20" fill="#e1e1e1" stroke="#adadad" stroke-width="1"/>
<text x="845" y="595.5" font-size="11.8" fill="#1a1a1a" stroke="#1a1a1a" stroke-width="0.1" textLength="32.7" lengthAdjust="spacingAndGlyphs">Cancel</text>
<path d="M897 607 L903 601 M900 607 L903 604" stroke="#a0a0a0" stroke-width="1"/>
<path d="M613.1 416.2 H904.7 V449.1 H613.1 Z M617.2 420.3 V445.6 H900 V420.3 Z" fill="#ff0000" fill-rule="evenodd"/>
<path d="M912.8 430.5 L926.2 423.9 L926.2 437.1 Z" fill="#ff0000"/>
<rect x="925" y="428.3" width="200.5" height="4.5" fill="#ff0000"/>
<text x="1137.3" y="436.1" font-size="29.5" fill="#ff0000" stroke="#ff0000" stroke-width="0" font-weight="700" textLength="291.7" lengthAdjust="spacingAndGlyphs">TYPE THE NEW NAME</text>
</svg></body></html>
